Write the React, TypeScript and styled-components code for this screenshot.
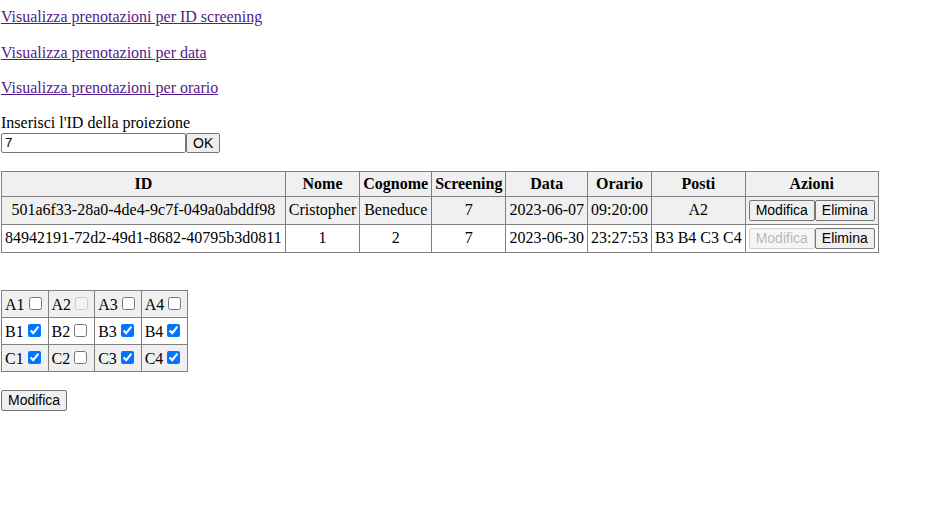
import React from 'react'
import styled, { createGlobalStyle } from 'styled-components'

const GlobalStyle = createGlobalStyle`
    body {
        margin: 0;
        font-family: "Liberation Serif", "Times New Roman", serif;
        font-size: 16px;
        color: #000;
        background: #fff;
    }
`

const Page = styled.div`
    padding: 7px 1px 20px 1px;
`

const NavLink = styled.a`
    display: block;
    width: max-content;
    line-height: 19px;
    margin-bottom: 16.5px;
    color: #551a8b;
    text-decoration: underline;
    cursor: pointer;
`

const Label = styled.div`
    line-height: 18.5px;
    margin-top: 1px;
`

const SearchRow = styled.div`
    display: flex;
    height: 20px;
    margin-top: 0.5px;
`

const IdInput = styled.input`
    box-sizing: border-box;
    width: 185px;
    height: 20px;
    margin: 0;
    padding: 1px 3px;
    border: 1px solid #767676;
    border-radius: 2px;
    font: 13.33px "Liberation Sans", Arial, sans-serif;
    color: #000;
`

const Button = styled.button`
    box-sizing: border-box;
    height: ${p => (p.$tall ? '21px' : '20px')};
    margin: 0;
    padding: 1px 6px;
    border: 1px solid ${p => (p.disabled ? 'rgba(118,118,118,0.3)' : '#767676')};
    border-radius: 2px;
    background: ${p => (p.disabled ? 'rgba(239,239,239,0.6)' : '#efefef')};
    color: ${p => (p.disabled ? 'rgba(16,16,16,0.3)' : '#000')};
    font: 14px "Liberation Sans", Arial, sans-serif;
    line-height: 16px;
    vertical-align: middle;
`

const Table = styled.table`
    border-collapse: collapse;
    margin-top: ${p => p.$top}px;

    thead tr,
    tbody tr:nth-child(odd) {
        background: #f0f0f0;
    }
    tbody tr:nth-child(even) {
        background: #fff;
    }
`

const Th = styled.th`
    border: 1px solid #808080;
    padding: 3px;
    font-weight: bold;
    text-align: center;
    white-space: nowrap;
`

const Td = styled.td`
    border: 1px solid #808080;
    padding: 3px;
    text-align: center;
    white-space: nowrap;
`

const SeatCell = styled.td`
    border: 1px solid #808080;
    padding: 3px;
    white-space: nowrap;
`

const Check = styled.input`
    width: 13px;
    height: 13px;
    margin: 3px 3px 3px 4px;
    accent-color: #0075ff;
`

const Footer = styled.div`
    margin-top: 18px;
`

const bookings = [
    {
        id: '501a6f33-28a0-4de4-9c7f-049a0abddf98',
        nome: 'Cristopher',
        cognome: 'Beneduce',
        screening: 7,
        data: '2023-06-07',
        orario: '09:20:00',
        posti: 'A2',
        editable: true,
    },
    {
        id: '84942191-72d2-49d1-8682-40795b3d0811',
        nome: '1',
        cognome: '2',
        screening: 7,
        data: '2023-06-30',
        orario: '23:27:53',
        posti: 'B3 B4 C3 C4',
        editable: false,
    },
]

const seats = [
    [['A1', false], ['A2', false, true], ['A3', false], ['A4', false]],
    [['B1', true], ['B2', false], ['B3', true], ['B4', true]],
    [['C1', true], ['C2', false], ['C3', true], ['C4', true]],
] as [string, boolean, boolean?][][]

const App = () => {
    return (
        <Page>
            <GlobalStyle />
            <NavLink>Visualizza prenotazioni per ID screening</NavLink>
            <NavLink>Visualizza prenotazioni per data</NavLink>
            <NavLink>Visualizza prenotazioni per orario</NavLink>
            <Label>Inserisci l'ID della proiezione</Label>
            <SearchRow>
                <IdInput defaultValue="7" />
                <Button>OK</Button>
            </SearchRow>
            <Table $top={18}>
                <thead>
                    <tr>
                        <Th>ID</Th>
                        <Th>Nome</Th>
                        <Th>Cognome</Th>
                        <Th>Screening</Th>
                        <Th>Data</Th>
                        <Th>Orario</Th>
                        <Th>Posti</Th>
                        <Th>Azioni</Th>
                    </tr>
                </thead>
                <tbody>
                    {bookings.map(b => (
                        <tr key={b.id}>
                            <Td>{b.id}</Td>
                            <Td>{b.nome}</Td>
                            <Td>{b.cognome}</Td>
                            <Td>{b.screening}</Td>
                            <Td>{b.data}</Td>
                            <Td>{b.orario}</Td>
                            <Td>{b.posti}</Td>
                            <Td>
                                <Button $tall disabled={!b.editable}>Modifica</Button>
                                <Button $tall>Elimina</Button>
                            </Td>
                        </tr>
                    ))}
                </tbody>
            </Table>
            <Table $top={37}>
                <tbody>
                    {seats.map((row, i) => (
                        <tr key={i}>
                            {row.map(([name, checked, disabled]) => (
                                <SeatCell key={name}>
                                    {name}
                                    <Check type="checkbox" defaultChecked={checked} disabled={disabled} />
                                </SeatCell>
                            ))}
                        </tr>
                    ))}
                </tbody>
            </Table>
            <Footer>
                <Button $tall>Modifica</Button>
            </Footer>
        </Page>
    )
}

export default App
